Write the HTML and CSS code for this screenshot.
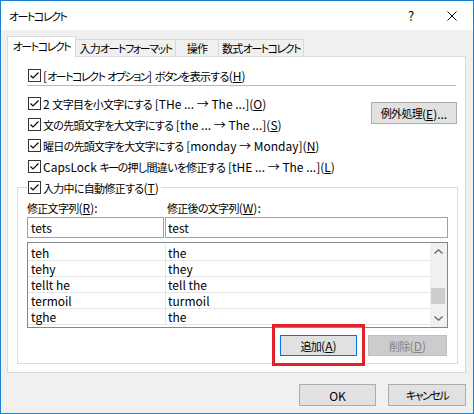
FILE: index.html
```html
<!DOCTYPE html>
<html lang="ja">
<head>
<meta charset="utf-8">
<title>オートコレクト</title>
<link rel="stylesheet" href="styles.css">
</head>
<body>
<div class="window">
  <div class="titlebar">
    <span class="title"><span class="k">オートコレクト</span></span>
    <span class="help">?</span>
    <span class="close"><svg width="10" height="10" viewBox="0 0 10 10"><path d="M0.5 0.5 L9.5 9.5 M9.5 0.5 L0.5 9.5" stroke="#000" stroke-width="1" fill="none"/></svg></span>
  </div>
  <div class="tabs">
    <div class="tab t1 active"><span class="k">オートコレクト</span></div>
    <div class="tab t2"><span class="j">入力</span><span class="k">オートフォーマット</span></div>
    <div class="tab t3"><span class="j">操作</span></div>
    <div class="tab t4"><span class="j">数式</span><span class="k">オートコレクト</span></div>
  </div>
  <div class="panel">
    <div class="check first">
      <svg class="cb" width="13" height="13" viewBox="0 0 13 13"><rect x="0.5" y="0.5" width="12" height="12" fill="#fff" stroke="#333"/><path d="M2.5 6.5 L5 9 L10.5 3.5" fill="none" stroke="#000" stroke-width="1.1"/></svg>
      <span>[<span class="k">オートコレクト</span> <span class="k">オプション</span>] <span class="k">ボタン</span><span class="j">を表示する</span>(<u>H</u>)</span>
    </div>
    <div class="sep"></div>
    <div class="opts">
      <div class="opt-list">
        <div class="check">
          <svg class="cb" width="13" height="13" viewBox="0 0 13 13"><rect x="0.5" y="0.5" width="12" height="12" fill="#fff" stroke="#333"/><path d="M2.5 6.5 L5 9 L10.5 3.5" fill="none" stroke="#000" stroke-width="1.1"/></svg>
          <span>2 <span class="j">文字目を小文字にする</span> [THe ... → The ...](<u>O</u>)</span>
        </div>
        <div class="check">
          <svg class="cb" width="13" height="13" viewBox="0 0 13 13"><rect x="0.5" y="0.5" width="12" height="12" fill="#fff" stroke="#333"/><path d="M2.5 6.5 L5 9 L10.5 3.5" fill="none" stroke="#000" stroke-width="1.1"/></svg>
          <span><span class="j">文の先頭文字を大文字にする</span> [the ... → The ...](<u>S</u>)</span>
        </div>
        <div class="check">
          <svg class="cb" width="13" height="13" viewBox="0 0 13 13"><rect x="0.5" y="0.5" width="12" height="12" fill="#fff" stroke="#333"/><path d="M2.5 6.5 L5 9 L10.5 3.5" fill="none" stroke="#000" stroke-width="1.1"/></svg>
          <span><span class="j">曜日の先頭文字を大文字にする</span> [monday → Monday](<u>N</u>)</span>
        </div>
        <div class="check">
          <svg class="cb" width="13" height="13" viewBox="0 0 13 13"><rect x="0.5" y="0.5" width="12" height="12" fill="#fff" stroke="#333"/><path d="M2.5 6.5 L5 9 L10.5 3.5" fill="none" stroke="#000" stroke-width="1.1"/></svg>
          <span>CapsLock <span class="k">キー</span><span class="j">の押し間違いを修正する</span> [tHE ... → The ...](<u>L</u>)</span>
        </div>
      </div>
      <button class="btn exc"><span class="j">例外処理</span>(<u>E</u>)...</button>
    </div>
    <fieldset class="group">
      <legend class="legend">
        <svg class="cb" width="13" height="13" viewBox="0 0 13 13"><rect x="0.5" y="0.5" width="12" height="12" fill="#fff" stroke="#333"/><path d="M2.5 6.5 L5 9 L10.5 3.5" fill="none" stroke="#000" stroke-width="1.1"/></svg>
        <span><span class="j">入力中に自動修正する</span>(<u>T</u>)</span>
      </legend>
      <div class="labels">
        <span class="lab1"><span class="j">修正文字列</span>(<u>R</u>):</span>
        <span class="lab2"><span class="j">修正後の文字列</span>(<u>W</u>):</span>
      </div>
      <div class="inputs">
        <div class="inp i1">tets</div>
        <div class="inp i2">test</div>
      </div>
      <div class="list">
        <div class="rows">
          <div class="row"><span class="c1">teh</span><span class="c2">the</span></div>
          <div class="row"><span class="c1">tehy</span><span class="c2">they</span></div>
          <div class="row"><span class="c1">tellt he</span><span class="c2">tell the</span></div>
          <div class="row"><span class="c1">termoil</span><span class="c2">turmoil</span></div>
          <div class="row"><span class="c1">tghe</span><span class="c2">the</span></div>
        </div>
        <div class="scroll">
          <div class="arrow"><svg width="9" height="5" viewBox="0 0 9 5"><path d="M0.5 4.5 L4.5 0.8 L8.5 4.5" fill="none" stroke="#606060" stroke-width="1.2"/></svg></div>
          <div class="track"><div class="thumb"></div></div>
          <div class="arrow"><svg width="9" height="5" viewBox="0 0 9 5"><path d="M0.5 0.5 L4.5 4.2 L8.5 0.5" fill="none" stroke="#606060" stroke-width="1.2"/></svg></div>
        </div>
      </div>
      <div class="actions">
        <button class="btn add"><span class="j">追加</span>(<u>A</u>)</button>
        <button class="btn del"><span class="j">削除</span>(<u>D</u>)</button>
      </div>
    </fieldset>
  </div>
  <div class="footer">
    <button class="btn ok">OK</button>
    <button class="btn cancel"><span class="k">キャンセル</span></button>
  </div>
</div>
</body>
</html>
```
FILE: styles.css
```css
* { box-sizing: border-box; }
html, body { margin: 0; padding: 0; }
body {
  font-family: "Noto Sans CJK JP", "Noto Sans", sans-serif;
  font-size: 12px;
  font-feature-settings: "palt";
  color: #000;
  background: #fff;
}
.k { font-size: 11px; letter-spacing: -1.5px; }
.j { font-size: 11px; letter-spacing: -0.7px; }
.window {
  width: 474px;
  height: 414px;
  border: 1px solid #1b7fd5;
  background: #f0f0f0;
  display: flex;
  flex-direction: column;
}
.titlebar {
  height: 29px;
  flex: none;
  background: #fff;
  display: flex;
  align-items: center;
  padding: 0 16px 0 8px;
}
.title { flex: 1; }
.help { width: 12px; text-align: center; font-size: 13px; }
.close { margin-left: 30px; width: 10px; height: 10px; display: flex; }

.tabs {
  display: flex;
  align-items: flex-end;
  height: 21px;
  margin: 6px 0 -1px 6px;
  position: relative;
  z-index: 1;
  flex: none;
}
.tab {
  height: 17px;
  margin-bottom: 1px;
  margin-left: -1px;
  border: 1px solid #d9d9d9;
  border-bottom: 0;
  background: #f0f0f0;
  display: flex;
  align-items: center;
  justify-content: center;
  white-space: nowrap;
  padding-bottom: 1px;
}
.tab.active {
  height: 21px;
  margin-bottom: 0;
  background: #fff;
  position: relative;
  z-index: 2;
  padding-bottom: 3px;
}
.t1 { width: 69px; margin-left: 0; }
.t2 { width: 101px; }
.t3 { width: 44px; }
.t4 { width: 86px; }

.panel {
  width: 459px;
  height: 317px;
  flex: none;
  margin-left: 6px;
  border: 1px solid #d9d9d9;
  background: #fff;
  padding: 8px 0 8px 0;
}
.check {
  display: flex;
  align-items: center;
  height: 21px;
  padding-left: 20px;
  white-space: nowrap;
}
.check.first { height: 20px; }
.cb { flex: none; margin-right: 2px; }
.sep {
  width: 429px;
  height: 1px;
  margin: 0 0 7px 19px;
  background: #b9b9b9;
}
.opts { display: flex; align-items: flex-start; }
.opt-list { flex: 1; }

.btn {
  font-family: inherit;
  font-size: 12px;
  font-feature-settings: "palt";
  color: #000;
  background: #e1e1e1;
  border: 1px solid #adadad;
  padding: 0;
  margin: 0;
  height: 21px;
  display: flex;
  align-items: center;
  justify-content: center;
  white-space: nowrap;
}
.exc { width: 86px; height: 22px; margin: 9px 8px 0 0; }

.group {
  width: 441px;
  margin: 0 0 0 9px;
  padding: 0 9px 7px 9px;
  border: 1px solid #dcdcdc;
  min-inline-size: 0;
}
.legend {
  display: flex;
  align-items: center;
  height: 21px;
  padding: 0 2px 0 1px;
  white-space: nowrap;
}
.labels {
  display: flex;
  align-items: center;
  height: 19px;
  white-space: nowrap;
}
.lab1 { width: 138px; }
.lab2 { padding-left: 2px; }
.inputs { display: flex; gap: 1px; height: 21px; }
.inp {
  border: 1px solid #a0a0a0;
  height: 21px;
  display: flex;
  align-items: center;
  background: #fff;
}
.i1 { width: 137px; padding-left: 3px; }
.i2 { width: 283px; padding-left: 2px; }

.list {
  margin-top: 4px;
  height: 86px;
  border: 1px solid #828790;
  display: flex;
  background: #fff;
}
.rows { flex: 1; overflow: hidden; padding-top: 2px; }
.row {
  display: flex;
  height: 16px;
  border-bottom: 1px solid #e6e6e6;
}
.row .c1 {
  width: 138px;
  border-right: 1px solid #e6e6e6;
  padding-left: 3px;
  line-height: 15px;
}
.row .c2 { padding-left: 2px; line-height: 15px; }
.scroll {
  width: 17px;
  flex: none;
  background: #f0f0f0;
  display: flex;
  flex-direction: column;
}
.arrow {
  height: 17px;
  display: flex;
  align-items: center;
  justify-content: center;
}
.track { flex: 1; }
.thumb {
  height: 16px;
  margin: 28px 2px 0 1px;
  background: #cdcdcd;
}

.actions {
  margin-top: 7px;
  display: flex;
  justify-content: flex-end;
  gap: 11px;
  padding-right: 1px;
}
.add {
  width: 77px;
  border-color: #0078d7;
  position: relative;
}
.add::after {
  content: "";
  position: absolute;
  left: -9px;
  right: -9px;
  top: -12px;
  bottom: -11px;
  border: 3px solid #e3202b;
}
.del {
  width: 79px;
  background: #cccccc;
  border-color: #bfbfbf;
  color: #838383;
}

.footer {
  display: flex;
  justify-content: flex-end;
  gap: 12px;
  padding-right: 7px;
  margin-top: 11px;
}
.ok { width: 77px; height: 22px; }
.cancel { width: 78px; height: 22px; }
```
